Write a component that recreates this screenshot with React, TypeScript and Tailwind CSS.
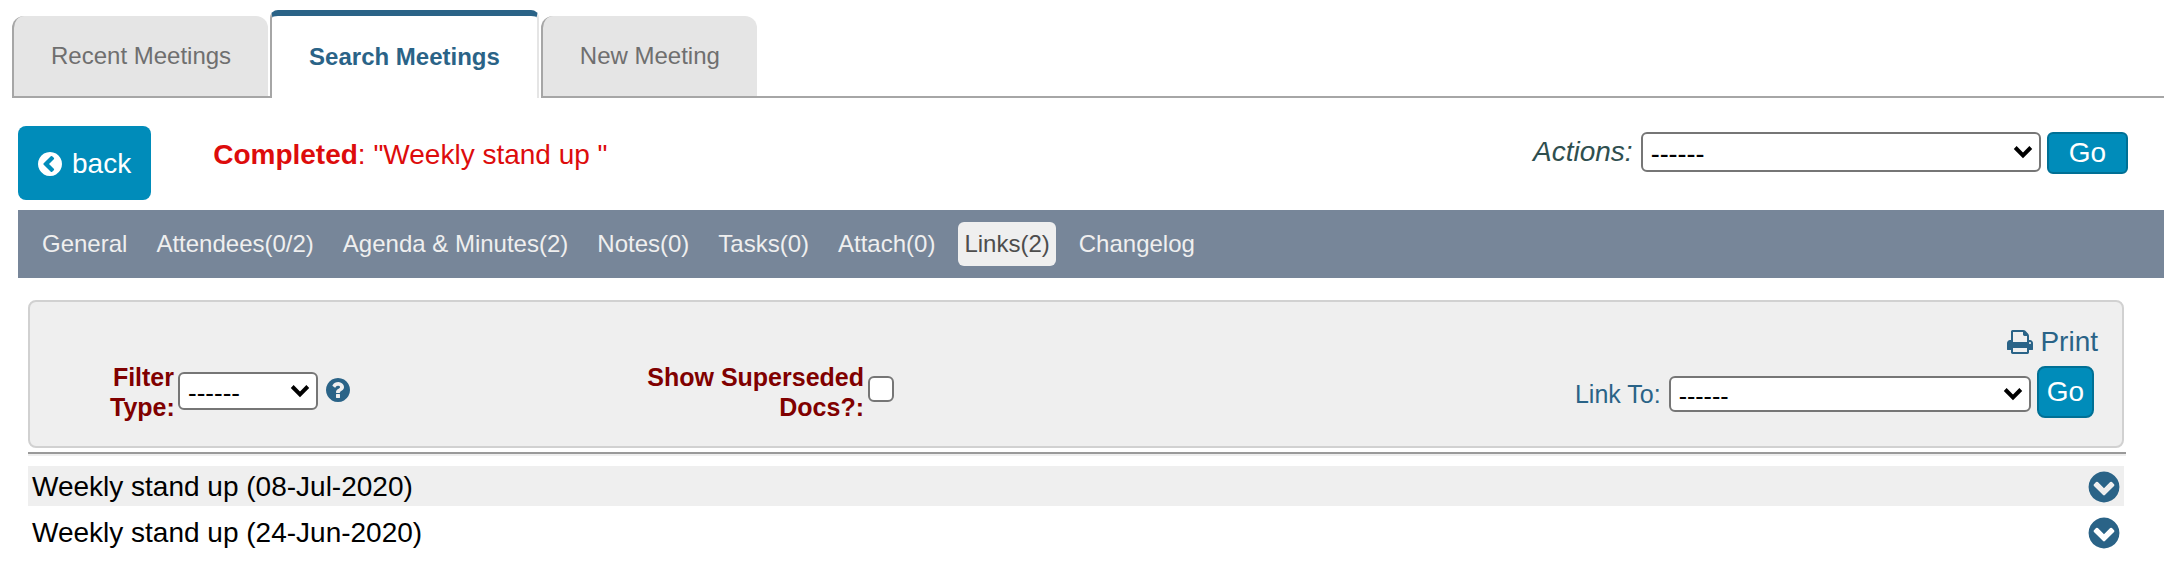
import { useState } from 'react'
import type { ReactNode, SelectHTMLAttributes } from 'react'

const TOP_TABS = ['Recent Meetings', 'Search Meetings', 'New Meeting']

const SECTIONS = [
  'General',
  'Attendees(0/2)',
  'Agenda & Minutes(2)',
  'Notes(0)',
  'Tasks(0)',
  'Attach(0)',
  'Links(2)',
  'Changelog',
]

const LINKS = ['Weekly stand up (08-Jul-2020)', 'Weekly stand up (24-Jun-2020)']

function Icon({ className, children }: { className: string; children: ReactNode }) {
  return (
    <svg viewBox="0 0 1792 1792" fill="currentColor" aria-hidden="true" className={`shrink-0 ${className}`}>
      {children}
    </svg>
  )
}

function ChevronCircle({ className }: { className: string }) {
  return (
    <Icon className={className}>
      <path d="M1037 1395l102-102q19-19 19-45t-19-45l-307-307 307-307q19-19 19-45t-19-45l-102-102q-19-19-45-19t-45 19l-454 454q-19 19-19 45t19 45l454 454q19 19 45 19t45-19zm627-499q0 209-103 385.500t-279.500 279.500-385.500 103-385.500-103-279.500-279.500-103-385.500 103-385.500 279.500-279.500 385.500-103 385.500 103 279.500 279.500 103 385.500z" />
    </Icon>
  )
}

function QuestionCircle({ className }: { className: string }) {
  return (
    <Icon className={className}>
      <path d="M1024 1376v-192q0-14-9-23t-23-9h-192q-14 0-23 9t-9 23v192q0 14 9 23t23 9h192q14 0 23-9t9-23zm256-672q0-88-55.500-163t-138.500-116-170-41q-243 0-371 213-15 24 8 42l132 100q7 6 19 6 16 0 25-12 53-68 86-92 34-24 86-24 48 0 85.500 26t37.500 59q0 38-20 61t-68 45q-63 28-115.500 86.500t-52.500 125.500v36q0 14 9 23t23 9h192q14 0 23-9t9-23q0-19 21.500-49.500t54.500-49.500q32-18 49-28.500t46-35 44.500-48 28-60.500 12.500-81zm384 192q0 209-103 385.500t-279.500 279.500-385.500 103-385.500-103-279.500-279.500-103-385.500 103-385.500 279.500-279.500 385.500-103 385.500 103 279.500 279.500 103 385.500z" />
    </Icon>
  )
}

function Printer({ className }: { className: string }) {
  return (
    <Icon className={className}>
      <path d="M448 1536h896v-256h-896v256zm0-640h896v-384h-160q-40 0-68-28t-28-68v-160h-640v640zm1152 64q0-26-19-45t-45-19-45 19-19 45 19 45 45 19 45-19 19-45zm128 0v416q0 13-9.500 22.500t-22.500 9.500h-224v160q0 40-28 68t-68 28h-960q-40 0-68-28t-28-68v-160h-224q-13 0-22.500-9.500t-9.500-22.500v-416q0-79 56.500-135.500t135.500-56.500h64v-544q0-40 28-68t68-28h672q40 0 88 20t76 48l152 152q28 28 48 76t20 88v256h64q79 0 135.500 56.500t56.500 135.500z" />
    </Icon>
  )
}

function Select({ className, ...rest }: SelectHTMLAttributes<HTMLSelectElement>) {
  return (
    <span className={`relative inline-flex ${className}`}>
      <select {...rest} className="w-full appearance-none rounded-md border-2 border-[#767676] bg-white pl-2 pr-8 text-black">
        <option>------</option>
      </select>
      <svg viewBox="0 0 20 14" className="pointer-events-none absolute right-2 top-1/2 h-[14px] w-5 -translate-y-1/2" aria-hidden="true">
        <path d="M2.200 2.500L10 10.300L17.800 2.500" fill="none" stroke="#000" strokeWidth="4" />
      </svg>
    </span>
  )
}

export default function App() {
  const [activeTab, setActiveTab] = useState('Search Meetings')
  const [section, setSection] = useState('Links(2)')
  const [showSuperseded, setShowSuperseded] = useState(false)

  return (
    <div className="bg-white pr-2 pt-[10px] font-['Liberation_Sans',Arial,sans-serif] text-[28px] text-black">
      {/* Top tabs */}
      <nav className="flex items-end pl-3 text-2xl">
        {TOP_TABS.map(tab => tab === activeTab ? (
          <div key={tab} className="pr-[2px]">
            <button onClick={() => setActiveTab(tab)}
              className="block h-[88px] rounded-t-lg border-x-2 border-t-[6px] border-l-[#a6a6a6] border-r-[#e5e5e5] border-t-[#2a6387] px-[37px] font-bold text-[#2a6387]">
              {tab}
            </button>
          </div>
        ) : (
          <div key={tab} className="border-b-2 border-[#a6a6a6] pr-[2px]">
            <button onClick={() => setActiveTab(tab)}
              className="block h-20 rounded-t-xl border-l-2 border-[#a6a6a6] bg-[#e5e5e5] px-[37px] text-[#6f6f6f]">
              {tab}
            </button>
          </div>
        ))}
        <span className="flex-1 border-b-2 border-[#a6a6a6]" />
      </nav>

      <main className="pl-[18px]">
        {/* Meeting title and actions */}
        <header className="flex items-start pb-[10px] pr-9 pt-7">
          <a href="#back" className="flex h-[74px] items-center gap-2 rounded-lg bg-[#008cba] pl-[18px] pr-5 pt-[2px] text-white">
            <ChevronCircle className="size-7" />
            back
          </a>
          <h1 className="ml-[62px] mt-[13px] leading-8 text-[#dd0c0c]">
            <b>Completed</b>: &quot;Weekly stand up &quot;
          </h1>
          <form className="ml-auto mt-[6px] flex items-start" onSubmit={e => e.preventDefault()}>
            <label htmlFor="actions" className="mr-2 leading-10 italic text-[#2f4f4f]">Actions:</label>
            <Select id="actions" className="h-10 w-[400px] text-[27px]" />
            <button className="ml-[6px] h-[42px] rounded-md border-2 border-[#007095] bg-[#008cba] px-5 leading-9 text-white">Go</button>
          </form>
        </header>

        {/* Section menu */}
        <nav className="flex h-[68px] items-center gap-[17px] bg-[#778699] pl-[18px] text-2xl">
          {SECTIONS.map(name => (
            <button key={name} onClick={() => setSection(name)}
              className={`h-11 rounded-md px-[6px] ${name === section ? 'bg-[#efefef] text-[#4d4d4d]' : 'text-[#efefef]'}`}>
              {name}
            </button>
          ))}
        </nav>

        <div className="pl-[10px] pr-[38px] pt-[22px]">
          {/* Filters */}
          <form className="mr-[2px] flex h-[148px] items-start rounded-lg border-2 border-[#d1d1d1] bg-[#efefef] pr-6" onSubmit={e => e.preventDefault()}>
            <div className="flex w-[600px] items-start pl-20 pt-[60px]">
              <label htmlFor="filter-type" className="w-16 text-right text-[25px] font-bold leading-[30px] text-[#800000]">Filter Type:</label>
              <Select id="filter-type" className="ml-1 mt-[10px] h-[38px] w-[140px] text-[26px]" />
              <a href="#help" aria-label="Help" className="ml-[6px] mt-[14px] text-[#2a6387]">
                <QuestionCircle className="size-7" />
              </a>
            </div>
            <div className="flex items-start pt-[60px]">
              <label htmlFor="superseded" className="w-[234px] text-right text-[25px] font-bold leading-[30px] text-[#800000]">Show Superseded Docs?:</label>
              <input id="superseded" type="checkbox" checked={showSuperseded} onChange={e => setShowSuperseded(e.target.checked)}
                className="ml-1 mt-[14px] size-[26px] appearance-none rounded-md border-2 border-[#767676] bg-white checked:bg-[#008cba]" />
            </div>
            <div className="ml-auto flex flex-col items-end pt-[22px] text-[#2a6387]">
              <a href="#print" className="flex items-center gap-[6px] leading-9">
                <Printer className="size-7" />
                Print
              </a>
              <div className="mr-1 mt-[6px] flex items-start">
                <label htmlFor="link-to" className="mr-2 pt-[10px] text-[25px] leading-9">Link To:</label>
                <Select id="link-to" className="mt-[10px] h-9 w-[362px] text-[25px]" />
                <button className="ml-[6px] h-[52px] rounded-lg border-2 border-[#007095] bg-[#008cba] px-2 text-white">Go</button>
              </div>
            </div>
          </form>

          <hr className="mt-1 border-b-2 border-t-2 border-b-[#eeeeee] border-t-[#9a9a9a]" />

          {/* Linked meetings */}
          <ul className="mr-[2px] mt-[10px] flex flex-col gap-[6px]">
            {LINKS.map(link => (
              <li key={link} className="flex h-10 items-center justify-between pl-1 pr-[2px] pt-[2px] odd:bg-[#efefef]">
                {link}
                <button aria-label={`Expand ${link}`} className="text-[#2a6387]">
                  <ChevronCircle className="size-9 -rotate-90" />
                </button>
              </li>
            ))}
          </ul>
        </div>
      </main>
    </div>
  )
}
